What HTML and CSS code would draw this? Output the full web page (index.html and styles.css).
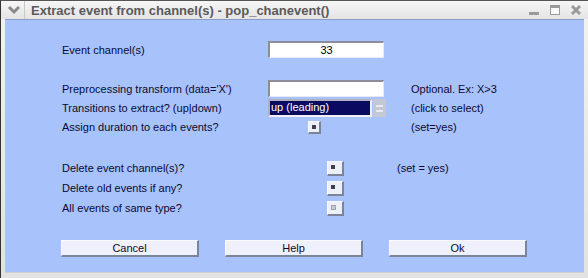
FILE: index.html
```html
<!DOCTYPE html>
<html lang="en">
<head>
  <meta charset="UTF-8">
  <title>Extract event from channel(s) - pop_chanevent()</title>
  <link rel="stylesheet" href="styles.css">
</head>
<body>

  <div class="window">
    <div class="titlebar">
      <span class="menu-btn">
        <svg width="14" height="10" viewBox="0 0 14 10"><path d="M2 2 L7 7 L12 2" fill="none" stroke="#8a8a8a" stroke-width="3"/></svg>
      </span>
      <span class="title">Extract event from channel(s) - pop_chanevent()</span>
      <span class="controls">
        <svg width="12" height="12" viewBox="0 0 12 12"><rect x="1" y="8" width="10" height="3" fill="#9a9a9a"/></svg>
        <svg width="12" height="12" viewBox="0 0 12 12"><rect x="1.5" y="1.5" width="9" height="9" fill="#fafafa" stroke="#9a9a9a"/><rect x="1" y="1" width="10" height="3" fill="#9a9a9a"/></svg>
        <svg width="12" height="12" viewBox="0 0 12 12"><path d="M2 2 L10 10 M10 2 L2 10" stroke="#9a9a9a" stroke-width="3"/></svg>
      </span>
    </div>

    <div class="body">
      <div class="row row-first">
        <span class="label">Event channel(s)</span>
        <div class="edit center">33</div>
      </div>

      <div class="row row-gap">
        <span class="label">Preprocessing transform (data='X')</span>
        <div class="edit"></div>
        <span class="note">Optional. Ex: X&gt;3</span>
      </div>

      <div class="row">
        <span class="label">Transitions to extract? (up|down)</span>
        <div class="listbox">
          <div class="list-sel">up (leading)</div>
          <div class="list-scroll"><span></span><span></span></div>
        </div>
        <span class="note">(click to select)</span>
      </div>

      <div class="row row-check">
        <span class="label">Assign duration to each events?</span>
        <div class="cell"><span class="check small checked"></span></div>
        <span class="note">(set=yes)</span>
      </div>

      <div class="row row-gap2 wide">
        <span class="label">Delete event channel(s)?</span>
        <div class="cell"><span class="check checked"></span></div>
        <span class="note">(set = yes)</span>
      </div>

      <div class="row wide">
        <span class="label">Delete old events if any?</span>
        <div class="cell"><span class="check checked"></span></div>
      </div>

      <div class="row wide">
        <span class="label">All events of same type?</span>
        <div class="cell"><span class="check off"></span></div>
      </div>

      <div class="buttons">
        <button>Cancel</button>
        <button>Help</button>
        <button>Ok</button>
      </div>
    </div>
  </div>

</body>
</html>
```

FILE: styles.css
```css
body {
  margin: 0;
  font-family: 'Liberation Sans', Arial, sans-serif;
  background-color: #000;
}

.window {
  width: 588px;
  height: 278px;
  box-sizing: border-box;
  background: linear-gradient(#f2f2f2, #e2e2e2);
  border-left: 1px solid #333;
  border-top: 1px solid #555;
  padding: 0 4px 5px 4px;
  display: flex;
  flex-direction: column;
}

.titlebar {
  height: 18px;
  display: flex;
  align-items: center;
  margin: 0 -4px;
  background: linear-gradient(#f6f6f6, #e4e4e4);
}

.menu-btn {
  width: 20px;
  height: 18px;
  display: flex;
  align-items: center;
  justify-content: center;
  margin-left: 3px;
  border-right: 1px solid #c8c8c8;
}

.title {
  margin-left: 6px;
  font-size: 13px;
  font-weight: bold;
  color: #5a5a5a;
}

.controls {
  margin-left: auto;
  margin-right: 6px;
  display: flex;
  gap: 9px;
}

.body {
  flex: 1;
  background-color: #a8c2fc;
  border-top: 1px solid #8a9cc8;
  border-bottom: 1px solid #d0d0d0;
  padding-left: 57px;
  color: #0a0a30;
  font-size: 11px;
}

.row {
  display: grid;
  grid-template-columns: 206px 143px auto;
  align-items: center;
  height: 17px;
  margin-top: 2px;
}

.row.wide {
  grid-template-columns: 206px 129px auto;
  height: 16px;
  margin-top: 4px;
}

.row.wide .cell {
  padding-left: 59px;
}

.row-first {
  margin-top: 21px;
}

.row-gap {
  margin-top: 22px;
}

.row-check {
  height: 14px;
  margin-top: 4px;
}

.row.row-gap2 {
  margin-top: 26px;
}

.label {
  white-space: nowrap;
}

.note {
  white-space: nowrap;
}

.edit {
  width: 116px;
  height: 17px;
  box-sizing: border-box;
  background-color: #fff;
  border-top: 2px solid #8c8c9c;
  border-left: 2px solid #8c8c9c;
  border-right: 1px solid #e8e8f0;
  border-bottom: 1px solid #e8e8f0;
  line-height: 14px;
}

.edit.center {
  text-align: center;
  color: #000;
}

.listbox {
  width: 118px;
  height: 18px;
  display: flex;
}

.list-sel {
  width: 104px;
  box-sizing: border-box;
  background-color: #0a0a60;
  color: #fff;
  border: 2px solid #b0b0c0;
  border-right-color: #f0f0f0;
  border-bottom-color: #f0f0f0;
  padding-left: 1px;
  line-height: 13px;
}

.list-scroll {
  width: 13px;
  margin-left: 1px;
  background-color: #c4c8d4;
  display: flex;
  flex-direction: column;
  align-items: center;
  justify-content: center;
  gap: 3px;
}

.list-scroll span {
  width: 7px;
  height: 2px;
  background-color: #e8eaf0;
}

.cell {
  display: flex;
  align-items: center;
}

.check {
  width: 17px;
  height: 15px;
  box-sizing: border-box;
  background-color: #eef0f8;
  border-right: 2px solid #7c8498;
  border-bottom: 2px solid #7c8498;
  border-top: 1px solid #f8f8ff;
  border-left: 1px solid #f8f8ff;
  position: relative;
}

.check.small {
  width: 13px;
  height: 13px;
  margin-left: 40px;
}

.check::after {
  content: "";
  position: absolute;
  left: 3px;
  top: 3px;
  width: 4px;
  height: 4px;
}

.check.checked::after {
  background-color: #404050;
}

.check.off::after {
  background-color: #c8ccd8;
  border: 1px solid #a0a4b0;
  width: 3px;
  height: 3px;
}

.buttons {
  display: flex;
  gap: 26px;
  margin-top: 24px;
  margin-left: -1px;
}

button {
  width: 138px;
  height: 17px;
  padding: 0;
  font-family: 'Liberation Sans', Arial, sans-serif;
  font-size: 11px;
  color: #0a0a30;
  background-color: #eef1fc;
  border-top: 1px solid #fafaff;
  border-left: 1px solid #fafaff;
  border-right: 2px solid #7c8498;
  border-bottom: 2px solid #7c8498;
}
```
